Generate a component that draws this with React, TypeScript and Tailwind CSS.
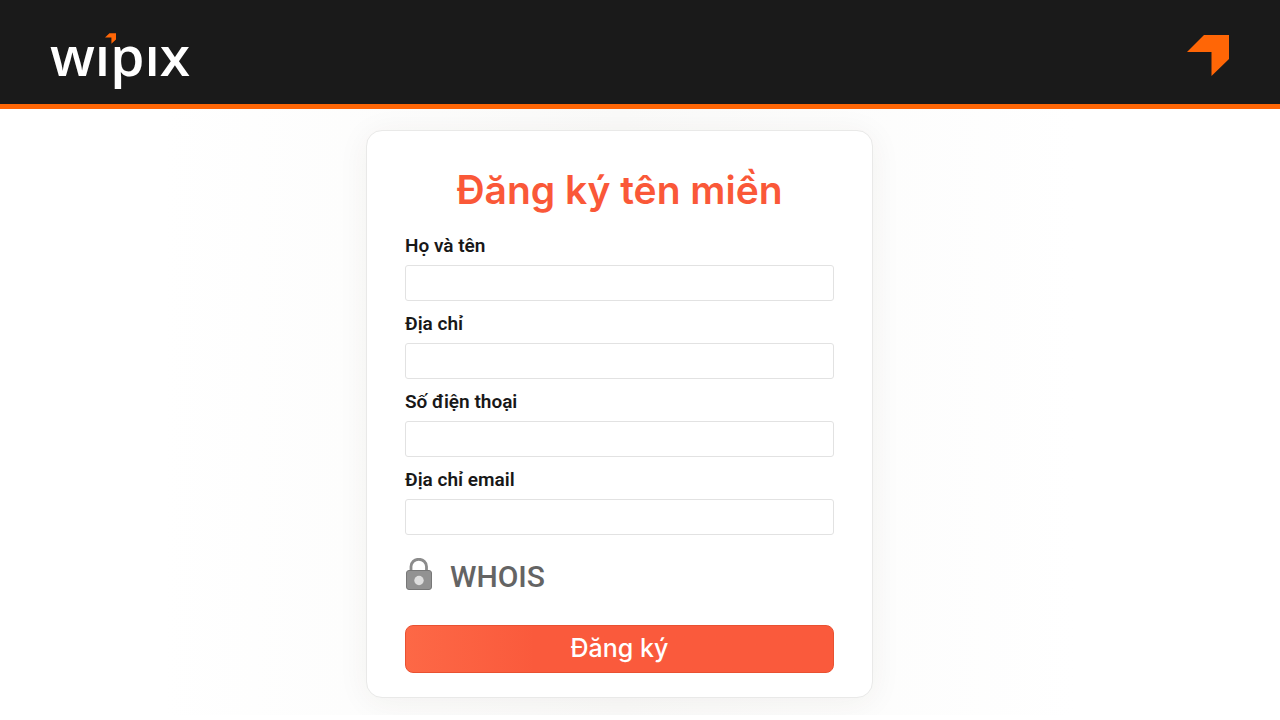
const fields = [
  { id: "name", label: "Họ và tên", type: "text" },
  { id: "address", label: "Địa chỉ", type: "text" },
  { id: "phone", label: "Số điện thoại", type: "tel" },
  { id: "email", label: "Địa chỉ email", type: "email" },
];

function Arrow({ className }: { className: string }) {
  return (
    <svg viewBox="0 0 42 41" className={className} fill="currentColor" aria-hidden="true">
      <path d="M17 0H42V24L24.500 41V17H0Z" />
    </svg>
  );
}

function Logo() {
  return (
    <a href="#" aria-label="wipix" className="relative block font-['Open_Sans'] text-[55px] leading-[52px] font-semibold text-white">
      wıpıx
      <Arrow className="absolute top-1 left-[55px] h-[11px] w-[11px] text-[#ff6606]" />
    </a>
  );
}

function LockIcon() {
  return (
    <svg viewBox="0 0 27 34" className="h-[34px] w-[27px]" aria-hidden="true">
      <path d="M6 14V8.500a7.500 7 0 0 1 15.500 0V14" fill="none" stroke="#8b8b8b" strokeWidth="2.800" />
      <rect x="1.500" y="12.500" width="25" height="19" rx="2.500" fill="#929292" stroke="#777777" />
      <circle cx="14" cy="22.500" r="4.700" fill="#dedede" />
    </svg>
  );
}

export default function App() {
  return (
    <div className="min-h-screen bg-white font-['Roboto',sans-serif]">
      <header className="flex h-[109px] items-center justify-between border-b-[5px] border-[#ff6606] bg-[#1a1a1a] pt-1.5 pr-[51px] pl-[50px]">
        <Logo />
        <Arrow className="h-[41px] w-[42px] text-[#ff6606]" />
      </header>
      <main className="pr-[41px]">
        <section className="mx-auto max-w-[911px] overflow-hidden bg-linear-to-r from-white via-[#fafaf9] to-white pt-[21px] pb-[17px]">
          <form className="mx-auto flex max-w-[507px] flex-col rounded-2xl border border-[#e9e9e8] bg-white px-[38px] pt-[35px] pb-6 shadow-[0_4px_32px_rgba(60,50,30,0.06)]">
            <h1 className="mb-[19px] text-center font-['Inter'] text-[39px] leading-12 font-semibold text-[#fa5838]">Đăng ký tên miền</h1>
            <div className="flex flex-col gap-2.5">
              {fields.map((field) => (
                <div key={field.id} className="flex flex-col gap-1.5">
                  <label htmlFor={field.id} className="text-[19px] leading-[26px] font-semibold text-[#181818]">{field.label}</label>
                  <input id={field.id} name={field.id} type={field.type} className="h-9 w-full rounded-[3px] border border-[#e2e2e2] bg-white px-3 text-base outline-none focus:border-[#fa5838]" />
                </div>
              ))}
            </div>
            <div className="mt-5 flex h-10 items-center gap-[18px]">
              <LockIcon />
              <span className="pt-1 text-[30px] leading-10 font-medium text-[#646464]">WHOIS</span>
            </div>
            <button type="submit" className="mt-[30px] h-12 rounded-lg border border-[#e95131] bg-linear-to-r from-[#fd6846] to-[#fa5a3c] to-30% font-['Inter'] text-[25px] font-medium text-white">Đăng ký</button>
          </form>
        </section>
      </main>
    </div>
  );
}
